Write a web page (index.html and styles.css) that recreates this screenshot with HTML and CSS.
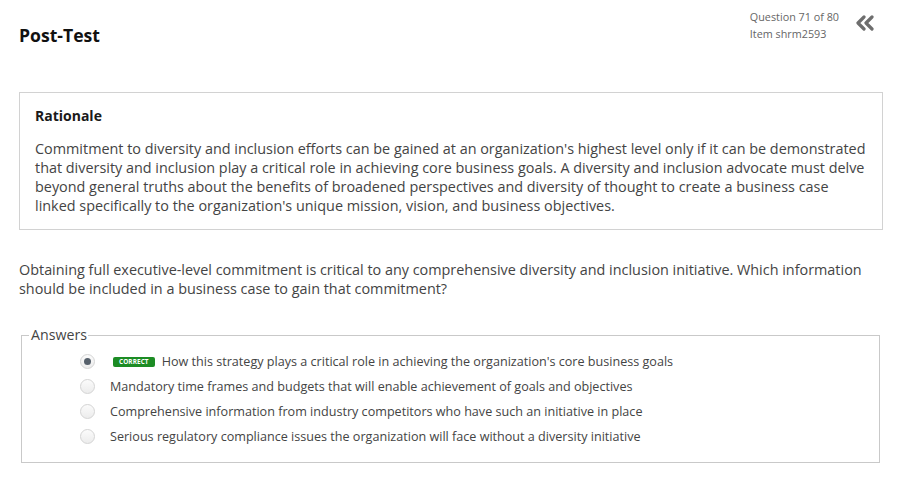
FILE: index.html
```html
<!DOCTYPE html>
<html lang="en">
<head>
<meta charset="utf-8">
<title>Post-Test</title>
<link rel="stylesheet" href="styles.css">
</head>
<body>
<div class="page">
  <header class="header">
    <h1 class="title">Post-Test</h1>
    <div class="meta-wrap">
      <div class="meta">
        <div>Question 71 of 80</div>
        <div>Item shrm2593</div>
      </div>
      <svg class="collapse" width="20" height="16" viewBox="0 0 20 16" aria-hidden="true">
        <path d="M9 2 L3 8 L9 14" fill="none" stroke="#6e6e6e" stroke-width="3.2" stroke-linecap="round" stroke-linejoin="round"/>
        <path d="M17 2 L11 8 L17 14" fill="none" stroke="#6e6e6e" stroke-width="3.2" stroke-linecap="round" stroke-linejoin="round"/>
      </svg>
    </div>
  </header>

  <section class="rationale">
    <h2 class="rationale-title">Rationale</h2>
    <p class="rationale-text">Commitment to diversity and inclusion efforts can be gained at an organization's highest level only if it can be demonstrated that diversity and inclusion play a critical role in achieving core business goals. A diversity and inclusion advocate must delve beyond general truths about the benefits of broadened perspectives and diversity of thought to create a business case linked specifically to the organization's unique mission, vision, and business objectives.</p>
  </section>

  <p class="question">Obtaining full executive-level commitment is critical to any comprehensive diversity and inclusion initiative. Which information should be included in a business case to gain that commitment?</p>

  <fieldset class="answers">
    <legend class="answers-legend">Answers</legend>
    <div class="answer">
      <span class="radio checked"></span>
      <span class="badge">CORRECT</span>
      <span class="answer-text">How this strategy plays a critical role in achieving the organization's core business goals</span>
    </div>
    <div class="answer">
      <span class="radio"></span>
      <span class="answer-text">Mandatory time frames and budgets that will enable achievement of goals and objectives</span>
    </div>
    <div class="answer">
      <span class="radio"></span>
      <span class="answer-text">Comprehensive information from industry competitors who have such an initiative in place</span>
    </div>
    <div class="answer">
      <span class="radio"></span>
      <span class="answer-text">Serious regulatory compliance issues the organization will face without a diversity initiative</span>
    </div>
  </fieldset>
</div>
</body>
</html>
```

FILE: styles.css
```css
* { box-sizing: border-box; }
html, body { margin: 0; padding: 0; background: #fff; }
body {
  font-family: "Open Sans", "Noto Sans", "DejaVu Sans", sans-serif;
  color: #444;
}
.page {
  width: 912px;
  padding: 0 29px 0 19px;
}
.header {
  height: 92px;
  display: flex;
  justify-content: space-between;
  align-items: flex-start;
}
.title {
  margin: 23px 0 0 0;
  font-size: 17.6px;
  line-height: 24px;
  font-weight: 700;
  color: #111;
}
.meta-wrap {
  display: flex;
  align-items: flex-start;
  margin-right: 8px;
  padding-top: 8px;
}
.meta {
  font-size: 10.8px;
  line-height: 17px;
  color: #666;
}
.collapse {
  margin-left: 16px;
  margin-top: 7px;
}
.rationale {
  border: 1px solid #d2d2d2;
  padding: 13px 15px 14px 15px;
}
.rationale-title {
  margin: 0;
  font-size: 14px;
  line-height: 20px;
  font-weight: 700;
  color: #1a1a1a;
}
.rationale-text {
  margin: 13px 0 0 0;
  font-size: 14.4px;
  line-height: 19px;
  color: #444;
}
.question {
  margin: 30px 0 0 0;
  font-size: 14.4px;
  line-height: 19px;
  color: #444;
}
.answers {
  margin: 28px 3px 0 2px;
  padding: 5px 0 13px 58px;
  border: 1px solid #c9c9c9;
  min-width: 0;
}
.answers-legend {
  margin-left: -51px;
  padding: 0 1px 0 2px;
  font-size: 14.2px;
  line-height: 18px;
  color: #444;
}
.answer {
  display: flex;
  align-items: center;
  height: 25px;
  font-size: 12.6px;
  color: #444;
}
.radio {
  width: 15px;
  height: 15px;
  border-radius: 50%;
  border: 1px solid #d4d4d4;
  background: linear-gradient(#fbfbfb, #ececec);
  margin-right: 15px;
  flex: none;
  display: flex;
  align-items: center;
  justify-content: center;
}
.radio.checked::after {
  content: "";
  width: 7px;
  height: 7px;
  border-radius: 50%;
  background: #56606b;
}
.badge {
  margin-left: 3px;
  margin-right: 7px;
  background: #1c8c24;
  color: #fff;
  font-size: 6.4px;
  font-weight: 700;
  line-height: 10px;
  height: 10px;
  padding: 0 6px;
  border-radius: 2px;
  letter-spacing: 0.1px;
}
```
